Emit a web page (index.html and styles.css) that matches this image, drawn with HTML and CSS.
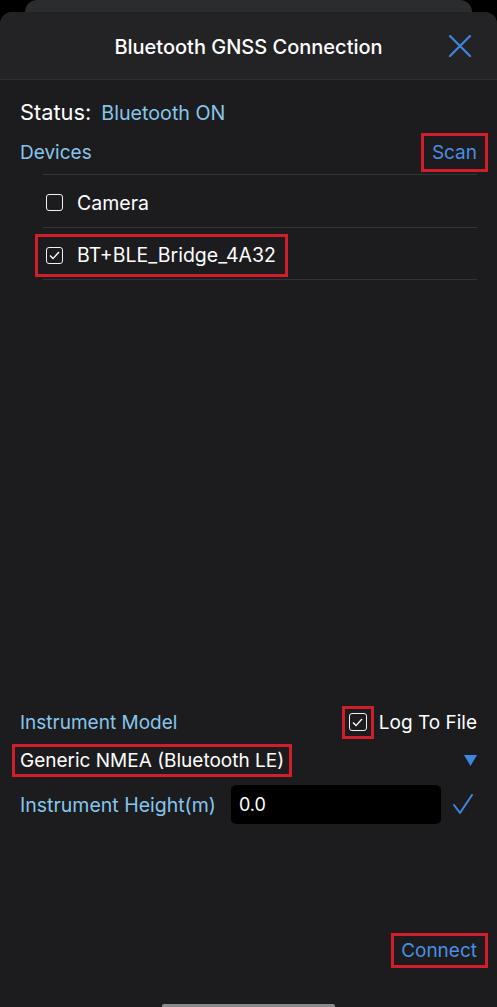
FILE: index.html
```html
<!DOCTYPE html>
<html lang="en">
<head>
<meta charset="utf-8">
<title>Bluetooth GNSS Connection</title>
<link rel="stylesheet" href="styles.css">
</head>
<body>
<div class="backcard"></div>
<div class="sheet">
  <header class="header">
    <span></span>
    <h1 class="title">Bluetooth GNSS Connection</h1>
    <button class="close" aria-label="Close">
      <svg width="22" height="22" viewBox="0 0 22 22"><path d="M1 1 L21 21 M21 1 L1 21" stroke="#3f86e0" stroke-width="2.2" stroke-linecap="round" fill="none"/></svg>
    </button>
  </header>
  <main class="content">
    <div class="status-row">
      <span class="status-label">Status:</span>
      <span class="status-value">Bluetooth ON</span>
    </div>
    <div class="devices-row">
      <span class="section-label">Devices</span>
      <span class="scan boxed">Scan</span>
    </div>
    <ul class="device-list">
      <li class="device">
        <span class="device-inner">
          <span class="cb"></span>
          <span class="device-name">Camera</span>
        </span>
      </li>
      <li class="device">
        <span class="device-inner boxed">
          <span class="cb checked">
            <svg width="11" height="9" viewBox="0 0 11 9"><path d="M1 4.6 L4 7.6 L10 1" stroke="#fff" stroke-width="1.4" fill="none"/></svg>
          </span>
          <span class="device-name">BT+BLE_Bridge_4A32</span>
        </span>
      </li>
    </ul>
    <div class="spacer"></div>
    <div class="model-row">
      <span class="section-label">Instrument Model</span>
      <span class="log">
        <span class="cb-wrap boxed">
          <span class="cb checked">
            <svg width="11" height="9" viewBox="0 0 11 9"><path d="M1 4.6 L4 7.6 L10 1" stroke="#fff" stroke-width="1.4" fill="none"/></svg>
          </span>
        </span>
        <span class="log-text">Log To File</span>
      </span>
    </div>
    <div class="select-row">
      <span class="select-value boxed">Generic NMEA (Bluetooth LE)</span>
      <svg class="tri" width="13" height="11" viewBox="0 0 13 11"><path d="M0 0 H13 L6.5 11 Z" fill="#3f86e0"/></svg>
    </div>
    <div class="height-row">
      <span class="section-label">Instrument Height(m)</span>
      <span class="height-input">0.0</span>
      <svg class="ok" width="20" height="21" viewBox="0 0 20 21"><path d="M1 11 L7 19 L19 1" stroke="#3f86e0" stroke-width="2" fill="none" stroke-linecap="round" stroke-linejoin="round"/></svg>
    </div>
    <div class="spacer2"></div>
    <div class="connect-row">
      <span class="connect boxed">Connect</span>
    </div>
  </main>
  <div class="home-bar"></div>
</div>
</body>
</html>
```

FILE: styles.css
```css
* { box-sizing: border-box; }
html, body {
  margin: 0;
  padding: 0;
  background: #000;
  width: 497px;
  height: 1007px;
  overflow: hidden;
  font-family: Inter, "Noto Sans", "Liberation Sans", sans-serif;
  color: #fff;
}
.backcard {
  height: 12px;
  margin: 0 25px;
  background: #2a2c2e;
  border-radius: 12px 12px 0 0;
}
.sheet {
  height: 995px;
  background: #1c1c1e;
  border-radius: 12px 12px 0 0;
  display: flex;
  flex-direction: column;
  overflow: hidden;
}
.header {
  height: 68px;
  flex: none;
  background: #232325;
  border-bottom: 1px solid #303032;
  display: grid;
  grid-template-columns: 1fr auto 1fr;
  align-items: center;
  padding-top: 2px;
}
.title {
  margin: 0;
  font-size: 20px;
  font-weight: 500;
  color: #fff;
}
.close {
  justify-self: end;
  margin-right: 26px;
  background: none;
  border: 0;
  padding: 0;
  display: flex;
  margin-top: -2px;
}
.content {
  flex: 1;
  display: flex;
  flex-direction: column;
  padding: 0 20px;
}
.status-row {
  margin-top: 19px;
  display: flex;
  align-items: baseline;
  gap: 10px;
  height: 25px;
}
.status-label { font-size: 21.8px; }
.status-value { font-size: 19.7px; color: #86c6ec; }
.devices-row {
  margin-top: 8px;
  display: flex;
  justify-content: space-between;
  align-items: center;
  height: 40px;
}
.section-label {
  font-size: 19px;
  color: #86c6ec;
}
.boxed {
  outline: 3px solid #d01f2a;
  outline-offset: -3px;
}
.scan {
  font-size: 19px;
  color: #4a8fe2;
  padding: 8px 11px;
  margin-right: -11px;
}
.device-list {
  list-style: none;
  margin: 2px 0 0 23px;
  padding: 0;
}
.device {
  height: 53px;
  border-top: 1px solid #333335;
  display: flex;
  align-items: center;
}
.device:last-child { border-bottom: 1px solid #333335; }
.device-inner {
  display: inline-flex;
  align-items: center;
  gap: 14px;
  height: 43px;
  padding: 0 12px 0 11px;
  margin-left: -8px;
  margin-top: 3px;
}
.device-name { font-size: 19.5px; }
.cb {
  width: 17px;
  height: 17px;
  border: 1.6px solid #f2f2f2;
  border-radius: 3px;
  display: inline-flex;
  align-items: center;
  justify-content: center;
  flex: none;
}
.spacer { flex: 1; }
.model-row {
  display: flex;
  justify-content: space-between;
  align-items: center;
  height: 34px;
}
.log {
  display: flex;
  align-items: center;
  gap: 5px;
}
.cb-wrap {
  display: inline-flex;
  align-items: center;
  justify-content: center;
  width: 32px;
  height: 33px;
}
.cb-wrap .cb { width: 18px; height: 18px; }
.log-text { font-size: 19px; }
.select-row {
  display: flex;
  justify-content: space-between;
  align-items: center;
  height: 34px;
  margin-top: 4px;
}
.select-value {
  font-size: 19px;
  padding: 5px 8px;
  margin-left: -8px;
}
.height-row {
  display: flex;
  align-items: center;
  height: 39px;
  margin-top: 8px;
}
.height-row .section-label { font-size: 19.5px; }
.height-input {
  margin-left: 15px;
  width: 210px;
  height: 39px;
  background: #000;
  border-radius: 5px;
  font-size: 18px;
  display: flex;
  align-items: center;
  padding-left: 8px;
}
.ok { margin-left: auto; margin-right: 4px; }
.spacer2 { height: 109px; flex: none; }
.connect-row {
  display: flex;
  justify-content: flex-end;
  height: 35px;
}
.connect {
  font-size: 19px;
  color: #4a8fe2;
  display: flex;
  align-items: center;
  padding: 0 11px 0 10px;
  margin-right: -11px;
}
.home-bar {
  flex: none;
  width: 173px;
  height: 3px;
  margin: 36px auto 0;
  background: #8a8a8c;
  border-radius: 2px 2px 0 0;
}
```
